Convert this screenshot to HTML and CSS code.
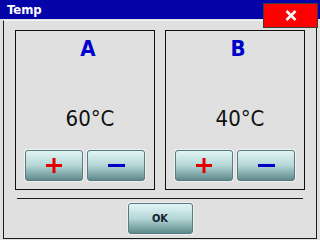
FILE: index.html
```html
<!DOCTYPE html>
<html lang="en">
  <head>
    <meta charset="UTF-8" />
    <meta name="viewport" content="width=device-width, initial-scale=1.0" />
    <title>Temp</title>
    <link rel="stylesheet" href="styles.css">
  </head>
  <body>
    <div class="window">
      <div class="titlebar">Temp</div>
      <button class="close" aria-label="Close">
        <svg width="12" height="11" viewBox="0 0 12 11">
          <path d="M1.5 1 L10.5 10 M10.5 1 L1.5 10" stroke="#fff" stroke-width="2.6" />
        </svg>
      </button>

      <div class="frame">
        <div class="panels">
          <div class="panel">
            <div class="label">A</div>
            <div class="temp">60°C</div>
            <div class="controls">
              <button class="btn" aria-label="Increase">
                <svg width="16" height="15" viewBox="0 0 16 15">
                  <path d="M8 0 V15 M0 7.5 H16" stroke="#e40000" stroke-width="3" />
                </svg>
              </button>
              <button class="btn" aria-label="Decrease">
                <svg width="17" height="3" viewBox="0 0 17 3">
                  <path d="M0 1.5 H17" stroke="#0000c8" stroke-width="3" />
                </svg>
              </button>
            </div>
          </div>

          <div class="panel">
            <div class="label">B</div>
            <div class="temp">40°C</div>
            <div class="controls">
              <button class="btn" aria-label="Increase">
                <svg width="16" height="15" viewBox="0 0 16 15">
                  <path d="M8 0 V15 M0 7.5 H16" stroke="#e40000" stroke-width="3" />
                </svg>
              </button>
              <button class="btn" aria-label="Decrease">
                <svg width="17" height="3" viewBox="0 0 17 3">
                  <path d="M0 1.5 H17" stroke="#0000c8" stroke-width="3" />
                </svg>
              </button>
            </div>
          </div>
        </div>

        <div class="separator"></div>

        <div class="footer">
          <button class="btn ok">OK</button>
        </div>
      </div>
    </div>
  </body>
</html>
```

FILE: styles.css
```css
* {
  box-sizing: border-box;
}

body {
  margin: 0;
  width: 320px;
  height: 240px;
  overflow: hidden;
  background: #e0e0e0;
  font-family: "DejaVu Sans Condensed", "DejaVu Sans", sans-serif;
}

.window {
  position: relative;
  width: 320px;
  height: 240px;
}

.titlebar {
  height: 19px;
  line-height: 19px;
  padding-left: 7px;
  background: #0404a8;
  color: #ffffff;
  font-size: 13px;
  font-weight: bold;
}

/* close button sits over the title bar and the frame */
.close {
  position: absolute;
  left: 263px;
  top: 3px;
  width: 55px;
  height: 25px;
  padding: 0;
  border: 1px solid #3c3c3c;
  background: #ff0000;
  display: flex;
  justify-content: center;
  align-items: center;
}

.frame {
  margin: 1px 3px 0 3px;
  height: 219px;
  border: 1px solid #1a1a1a;
  border-top-color: #f6f6f6;
  padding: 9px 11px 0 11px;
}

.panels {
  display: flex;
  gap: 10px;
}

.panel {
  width: 140px;
  height: 160px;
  border: 1px solid #101010;
  padding-top: 5px;
  display: flex;
  flex-direction: column;
  align-items: center;
}

.label {
  height: 26px;
  line-height: 26px;
  font-size: 22px;
  font-weight: bold;
  color: #0000cc;
  padding-left: 6px;
}

.temp {
  margin-top: 44px;
  height: 26px;
  line-height: 26px;
  font-size: 22px;
  color: #101010;
  padding-left: 10px;
}

.controls {
  margin-top: 18px;
  display: flex;
  gap: 4px;
}

.btn {
  width: 58px;
  height: 31px;
  padding: 0;
  border: 1px solid #557a80;
  border-radius: 3px;
  background: linear-gradient(#e2f5f5, #b4d6d6 50%, #5e8a8c);
  box-shadow: 0 0 0 1px rgba(255, 255, 255, 0.5);
  display: flex;
  justify-content: center;
  align-items: center;
}

.separator {
  margin: 8px 2px 0 2px;
  border-top: 1px solid #1a1a1a;
}

.footer {
  display: flex;
  justify-content: center;
  padding-top: 4px;
}

.ok {
  width: 65px;
  font-size: 11px;
  font-weight: bold;
  color: #14202c;
  font-family: "DejaVu Sans Condensed", "DejaVu Sans", sans-serif;
}
```
